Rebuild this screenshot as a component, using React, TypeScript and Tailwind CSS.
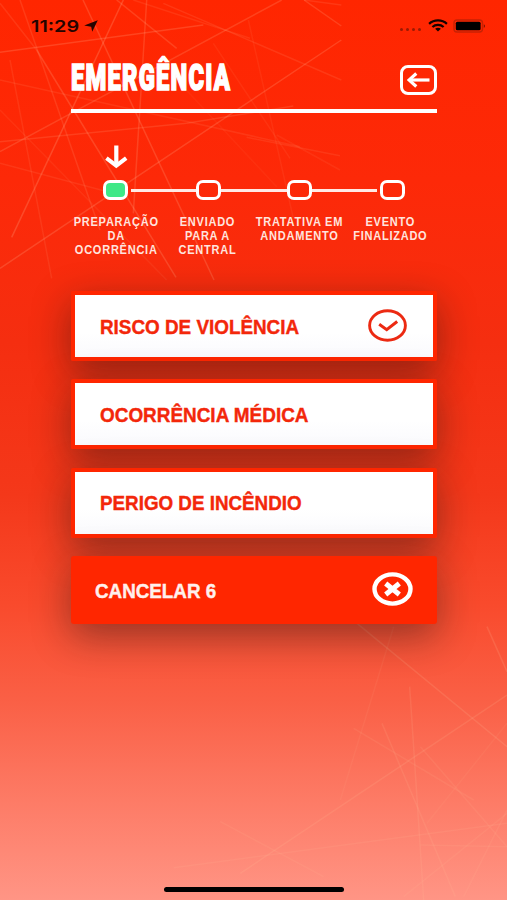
import { useState } from 'react';

interface EmergencyOption {
  id: string;
  label: string;
  scale: string;
}

interface Step {
  lines: string[];
  active?: boolean;
}

const options: EmergencyOption[] = [
  { id: 'violencia', label: 'RISCO DE VIOLÊNCIA', scale: 'scale-x-[0.943]' },
  { id: 'medica', label: 'OCORRÊNCIA MÉDICA', scale: 'scale-x-[0.946]' },
  { id: 'incendio', label: 'PERIGO DE INCÊNDIO', scale: 'scale-x-[0.94]' },
];

const steps: Step[] = [
  { lines: ['PREPARAÇÃO', 'DA', 'OCORRÊNCIA'], active: true },
  { lines: ['ENVIADO', 'PARA A', 'CENTRAL'] },
  { lines: ['TRATATIVA EM', 'ANDAMENTO'] },
  { lines: ['EVENTO', 'FINALIZADO'] },
];

// x1, y1, x2, y2, opacity on a 1521x2700 canvas
const scratches = [
  [60, 0, 300, 690, 0.14],
  [0, 10, 110, 150, 0.12],
  [110, 150, 528, 832, 0.2],
  [249, 0, 642, 840, 0.2],
  [370, 0, 35, 712, 0.22],
  [0, 157, 610, 75, 0.2],
  [440, 0, 400, 640, 0.18],
  [845, 0, 0, 455, 0.18],
  [1024, 120, 0, 805, 0.2],
  [350, 0, 530, 145, 0.18],
  [400, 0, 750, 115, 0.1],
  [0, 240, 900, 440, 0.1],
  [0, 490, 340, 580, 0.1],
  [30, 180, 155, 835, 0.1],
  [0, 330, 500, 840, 0.08],
  [0, 425, 560, 370, 0.15],
  [560, 370, 880, 318, 0.15],
  [490, 10, 1024, 240, 0.12],
  [912, 0, 1024, 78, 0.18],
  [912, 0, 1024, 15, 0.12],
  [745, 60, 880, 655, 0.08],
  [640, 130, 870, 475, 0.08],
  [740, 412, 1020, 467, 0.1],
  [830, 405, 1020, 510, 0.08],
  [540, 250, 830, 560, 0.05],
  [1071, 1870, 1521, 2240, 0.16],
  [1521, 2085, 721, 2620, 0.15],
  [1229, 2060, 1271, 2700, 0.14],
  [1146, 2170, 1366, 2690, 0.13],
  [1061, 2185, 1421, 2400, 0.1],
  [1181, 1880, 1021, 2400, 0.08],
  [1461, 1880, 1521, 2015, 0.17],
  [1261, 2240, 1521, 2540, 0.1],
  [1521, 2170, 1281, 2470, 0.07],
  [521, 2603, 1521, 2470, 0.12],
  [1261, 2535, 1521, 2540, 0.1],
  [1521, 2440, 1211, 2690, 0.1],
  [1521, 2430, 1391, 2690, 0.1],
  [661, 2465, 971, 2630, 0.1],
];

function Scratches() {
  return (
    <svg className="absolute inset-0 h-full w-full" viewBox="0 0 1521 2700" preserveAspectRatio="none">
      {scratches.map(([x1, y1, x2, y2, opacity], index) => (
        <line key={index} x1={x1} y1={y1} x2={x2} y2={y2} stroke="#ffc09a" strokeWidth="4.5" strokeOpacity={opacity} />
      ))}
    </svg>
  );
}

function StatusBar() {
  return (
    <div className="flex h-[50px] items-start justify-between pt-[18px] pr-[21px] pl-[31px]">
      <div className="flex items-start">
        <span className="w-[49px] font-['Inter'] text-[16px] leading-4 font-semibold text-[#250400]">
          <span className="inline-block origin-left scale-x-[1.24]">11:29</span>
        </span>
        <svg className="mt-[2px] ml-[4px] h-[12px] w-[14px]" viewBox="0 0 14 12">
          <path d="M13.8 0.3 8.2 11.8 7.2 6.8 0.2 5.4Z" fill="#250400" />
        </svg>
      </div>

      <div className="flex items-start">
        <div className="mt-[10px] mr-[7px] flex gap-[3px]">
          {[0, 1, 2, 3].map((dot) => (
            <span key={dot} className="h-[3px] w-[3px] rounded-full bg-[#9c1a04]" />
          ))}
        </div>
        <svg className="mt-[1px] h-[13px] w-[20px]" viewBox="0 0 20 13" fill="none" stroke="#140200" strokeWidth="2.2">
          <path d="M1.1 4.9C6 .3 14 .3 18.9 4.9" />
          <path d="M4.4 8C7.5 5.1 12.5 5.1 15.6 8" />
          <path d="M10 12.6 7.1 9.8C8.7 8.4 11.3 8.4 12.9 9.8Z" fill="#140200" stroke="none" />
        </svg>
        <svg className="mt-[1px] ml-[5px] h-[14px] w-[33px]" viewBox="0 0 33 14">
          <rect x="1" y="1" width="28.5" height="12" rx="3" fill="none" stroke="#c82204" strokeWidth="1.4" />
          <rect x="2.8" y="2.8" width="24.8" height="8.4" rx="1.5" fill="#000" />
          <path d="M30.8 5.2C32.4 5.6 32.4 8.4 30.8 8.8Z" fill="#7a1402" />
        </svg>
      </div>
    </div>
  );
}

function Progress() {
  return (
    <div className="mt-[31px] h-[113px]">
      <svg className="ml-[34px] h-[25px] w-[23px]" viewBox="0 0 23 25" fill="none" stroke="#fff">
        <path d="M11.3 1.5V22" strokeWidth="4.2" />
        <path d="M1.4 14.2 11.3 21.7 21.2 14.2" strokeWidth="4" />
      </svg>

      <div className="mt-[11px] grid grid-cols-4">
        {steps.map((step, index) => (
          <div key={step.lines[0]} className="flex flex-col items-center">
            <div className="flex w-full items-center">
              <span
                className={`h-[3px] flex-1 ${index === 0 ? '' : index === 3 ? 'mr-[3px] bg-[#ffe9e4]' : 'bg-[#ffe9e4]'}`}
              />
              <span
                className={`h-[20px] w-[25px] rounded-[7px] border-[3.5px] border-white ${
                  step.active ? 'bg-[#3fe887]' : ''
                }`}
              />
              <span
                className={`h-[3px] flex-1 ${index === 3 ? '' : index === 0 ? 'ml-[3px] bg-[#ffe9e4]' : 'bg-[#ffe9e4]'}`}
              />
            </div>
            <p className="mt-[15px] mr-[1px] text-center font-['Liberation_Sans'] text-[12px] leading-[14px] font-bold tracking-[0.8px] whitespace-nowrap text-[#ffe4de]">
              {step.lines.map((line) => (
                <span key={line} className="block scale-x-[0.92]">
                  {line}
                </span>
              ))}
            </p>
          </div>
        ))}
      </div>
    </div>
  );
}

function App() {
  const [selected, setSelected] = useState('violencia');

  return (
    <main className="relative h-[900px] w-[507px] overflow-hidden bg-[linear-gradient(180deg,#ff2600_0%,#fd2908_20%,#f52e10_38%,#f4381a_55%,#f94a2c_67%,#fa6046_78%,#fd7b66_89%,#ff9585_100%)] font-['Liberation_Sans',sans-serif]">
      <Scratches />

      <div className="relative flex h-full flex-col">
        <StatusBar />

        <div className="pr-[70px] pl-[71px]">
          <header className="flex h-[63px] items-start justify-between border-b-4 border-white">
            <h1 className="mt-[5px] w-[162px] font-['Roboto'] text-[36px] leading-[46px] font-black text-white">
              <span className="inline-block origin-left scale-x-[0.66] tracking-[1.8px] [-webkit-text-stroke:1.6px_white]">
                EMERGÊNCIA
              </span>
            </h1>
            <button
              type="button"
              aria-label="Voltar"
              className="mt-[15px] flex h-[30px] w-[37px] items-center justify-center rounded-[8px] border-[3px] border-white"
            >
              <svg className="h-[16px] w-[23px]" viewBox="0 0 23 16" fill="none" stroke="#fff" strokeWidth="3.2">
                <path d="M22.5 8H2.5" />
                <path d="M9.3 1.5 2 8 9.3 14.5" />
              </svg>
            </button>
          </header>

          <Progress />

          <div className="mt-[34px] flex flex-col gap-[18.3px]">
            {options.map((option) => (
              <button
                key={option.id}
                type="button"
                onClick={() => setSelected(option.id)}
                className="flex h-[70px] items-center justify-between rounded-[2px] border-[4px] border-[#ff2600] bg-linear-to-b from-white from-60% to-[#fafafd] pr-[26px] pl-[25px] shadow-[0_12px_38px_rgba(20,20,20,0.44)]"
              >
                <span
                  className={`mt-[1px] origin-left text-[20px] leading-6 font-bold whitespace-nowrap text-[#f3270a] [-webkit-text-stroke:0.4px_#f3270a] ${option.scale}`}
                >
                  {option.label}
                </span>
                {selected === option.id ? (
                  <svg className="mb-[2px] h-[33px] w-[39px]" viewBox="0 0 39 32" fill="none" stroke="#ec2a12">
                    <ellipse cx="19.5" cy="16" rx="17.9" ry="14.7" strokeWidth="2.9" />
                    <path d="M11.2 14.8 18.7 20.2 29.2 12" strokeWidth="3" />
                  </svg>
                ) : null}
              </button>
            ))}

            <button
              type="button"
              className="flex h-[68px] items-center justify-between rounded-[3px] bg-[#ff2600] pr-[24px] pl-[24px] shadow-[0_12px_38px_rgba(20,20,20,0.44)]"
            >
              <span className="mt-[2px] origin-left scale-x-[0.94] text-[20px] leading-6 font-bold text-[#fff0ed] [-webkit-text-stroke:0.4px_#fff0ed]">
                CANCELAR 6
              </span>
              <svg className="mb-[2px] h-[34px] w-[41px]" viewBox="0 0 41 34" fill="none" stroke="#fff">
                <ellipse cx="20.5" cy="17" rx="18" ry="14.6" strokeWidth="4.4" />
                <path d="M13.7 11.5 27.3 22.5M27.3 11.5 13.7 22.5" strokeWidth="5" />
              </svg>
            </button>
          </div>
        </div>

        <div className="mt-auto mb-[8px] ml-[164px] h-[5px] w-[180px] rounded-full bg-black" />
      </div>
    </main>
  );
}

export default App;
